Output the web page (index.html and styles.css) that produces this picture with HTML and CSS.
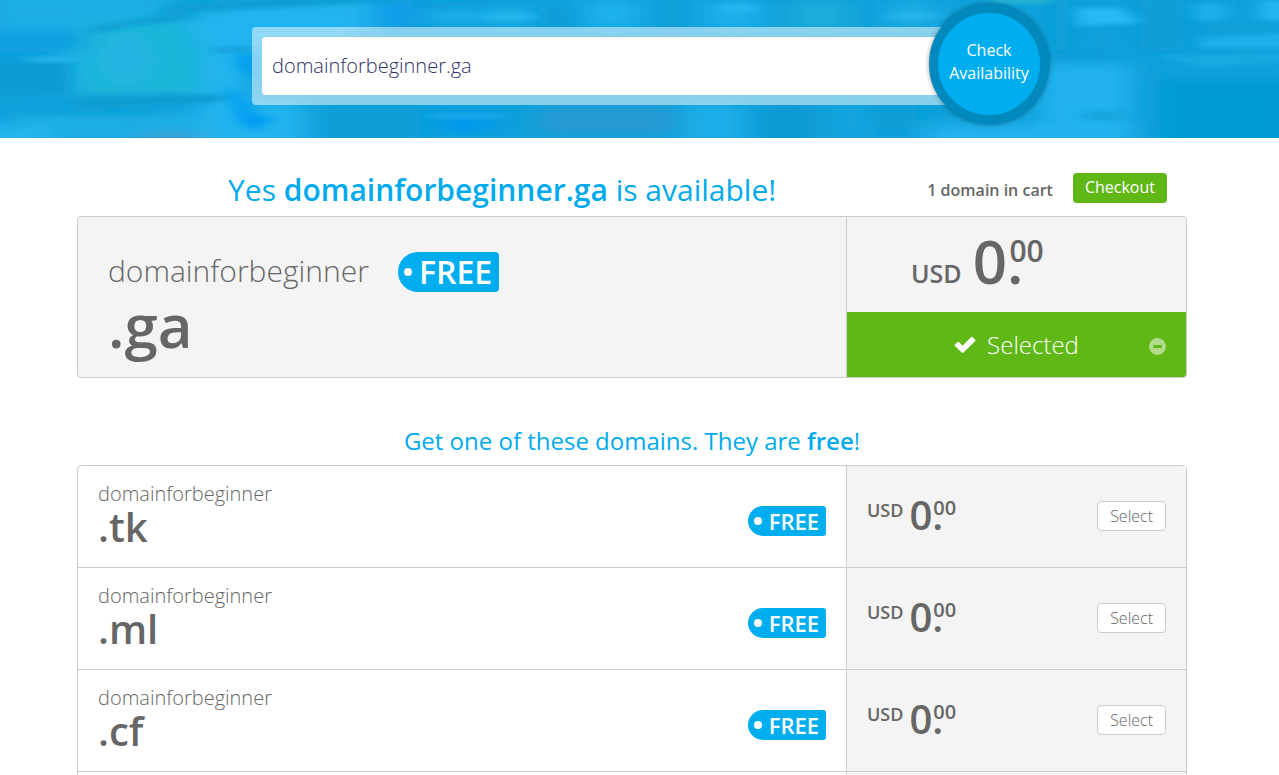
FILE: index.html
```html
<!DOCTYPE html>
<html lang="en">
<head>
    <meta charset="UTF-8">
    <meta name="viewport" content="width=device-width, initial-scale=1.0">
    <title>Check Availability</title>
    <link rel="stylesheet" href="styles.css">
</head>
<body>
    <header class="banner">
        <svg class="banner-bg" viewBox="0 0 1279 138" preserveAspectRatio="none" aria-hidden="true">
            <defs>
                <filter id="soft" x="-5%" y="-20%" width="110%" height="140%"><feGaussianBlur stdDeviation="14 6"/></filter>
                <filter id="streak" x="-5%" y="-20%" width="110%" height="140%"><feGaussianBlur stdDeviation="8 2"/></filter>
            </defs>
            <rect width="1279" height="138" fill="#0fa0da"/>
            <g filter="url(#soft)">
                <rect x="-20" y="-10" width="190" height="40" fill="#1cade6"/>
                <rect x="-20" y="32" width="100" height="20" fill="#0c9fe2"/>
                <rect x="60" y="50" width="160" height="44" fill="#1fb3e2"/>
                <path d="M84 20H190L208 96H82Z" fill="#1eb6d8"/>
                <ellipse cx="126" cy="58" rx="28" ry="28" fill="#22b5e2"/>
                <path d="M180 14L260 0H372V30L330 50H250V100L306 104V150H200V50Z" fill="#22b4ee"/>
                <rect x="20" y="112" width="180" height="40" fill="#1aade6"/>
                <rect x="-20" y="124" width="70" height="30" fill="#22b5ee"/>
                <rect x="139" y="134" width="65" height="12" fill="#3c9fd0"/>
                <rect x="378" y="0" width="36" height="28" fill="#079ceb"/>
                <rect x="433" y="8" width="42" height="16" fill="#1cb0ea"/>
                <rect x="482" y="8" width="56" height="16" fill="#1cb0ea"/>
                <rect x="584" y="0" width="56" height="28" fill="#1fb2ec"/>
                <rect x="310" y="108" width="110" height="40" fill="#0d9dd7"/>
                <rect x="437" y="114" width="58" height="18" fill="#0298ee"/>
                <rect x="540" y="108" width="136" height="26" fill="#2699d2"/>
                <rect x="684" y="104" width="62" height="44" fill="#1aaee8"/>
                <rect x="756" y="104" width="60" height="44" fill="#089ad4"/>
                <rect x="836" y="104" width="30" height="44" fill="#14a6e0"/>
                <rect x="872" y="100" width="44" height="30" fill="#0b9dd6"/>
                <rect x="704" y="2" width="58" height="26" fill="#1db0eb"/>
                <rect x="790" y="2" width="58" height="26" fill="#1baed9"/>
                <rect x="889" y="2" width="48" height="26" fill="#1baee7"/>
                <rect x="1040" y="64" width="90" height="90" fill="#21b3ee"/>
                <rect x="924" y="124" width="210" height="30" fill="#20b2ed"/>
                <rect x="1134" y="70" width="24" height="80" fill="#0b9fd9"/>
                <rect x="1160" y="80" width="140" height="70" fill="#069ad4"/>
                <rect x="1052" y="0" width="20" height="50" fill="#0c9dd6"/>
                <rect x="1140" y="0" width="44" height="50" fill="#0a9cd6"/>
            </g>
            <g filter="url(#streak)">
                <path d="M160 13L290 7L400 0V-4H300L170 6Z" fill="#0a9dd4"/>
                <path d="M90 27L180 12L200 18L130 26L96 34Z" fill="#0b9fd4"/>
                <path d="M73 98L228 94L220 102L73 108Z" fill="#0b9dd2"/>
                <path d="M210 48H256V52H214Z" fill="#0c9dd8"/>
                <path d="M236 56L258 54V84L240 68Z" fill="#049ef0"/>
                <path d="M228 84L244 98L256 114L274 118L254 132L240 124L232 104Z" fill="#009df2"/>
                <rect x="28" y="57" width="44" height="5" fill="#27b8ef"/>
                <rect x="-10" y="62" width="80" height="32" fill="#0b9bd4"/>
                <rect x="30" y="110" width="130" height="3" fill="#0b9cd6"/>
                <rect x="433" y="114" width="66" height="4" fill="#22b0ee"/>
                <rect x="420" y="3" width="70" height="4" fill="#0a9bd7"/>
                <rect x="540" y="8" width="30" height="18" fill="#0b9dd8"/>
                <rect x="486" y="14" width="46" height="6" fill="#27b8f0"/>
                <rect x="722" y="4" width="34" height="8" fill="#27b7f0"/>
                <rect x="890" y="14" width="46" height="5" fill="#29b8ef"/>
                <rect x="994" y="-3" width="56" height="6" fill="#2cb6cc"/>
                <path d="M1076 8H1122L1140 23L1078 26Z" fill="#26b9f5"/>
                <rect x="1194" y="4" width="34" height="16" fill="#1bafe9"/>
                <path d="M1262 0H1290V22L1256 18Z" fill="#22b6f2"/>
                <path d="M1203 38L1290 33V48H1200Z" fill="#1fb1eb"/>
                <path d="M1155 56L1290 52V62L1200 68Z" fill="#16a9e2"/>
                <rect x="1050" y="54" width="60" height="4" fill="#089ad4"/>
                <rect x="1080" y="111" width="44" height="9" fill="#12a5df"/>
            </g>
        </svg>
        <form class="search">
            <input class="search-input" type="text" aria-label="Domain name" value="domainforbeginner.ga">
            <button class="search-btn" type="button">Check<br>Availability</button>
        </form>
    </header>

    <main class="main">
        <div class="top">
            <h1 class="title">Yes <strong>domainforbeginner.ga</strong> is available!</h1>
            <div class="cart">
                <span class="cart-count">1 domain in cart</span>
                <a class="checkout" href="#">Checkout</a>
            </div>
        </div>

        <section class="result">
            <div class="result-name">
                <div class="result-line">
                    <span class="result-domain">domainforbeginner</span>
                    <span class="tag tag-big">FREE</span>
                </div>
                <div class="result-tld">.ga</div>
            </div>
            <div class="result-side">
                <div class="price price-big">
                    <span class="currency">USD</span>
                    <span class="amount">0.</span>
                    <span class="cents">00</span>
                </div>
                <button class="selected" type="button">
                    <span class="selected-label">
                        <svg class="check" viewBox="0 0 22 17" aria-hidden="true"><path d="M1 8.500L3.300 6.200Q4.200 5.400 5.100 6.200L8.600 9.700L16.900 1.200Q17.800 .4 18.700 1.200L21 3.500Q21.800 4.400 21 5.300L9.500 16.500Q8.600 17.200 7.700 16.500L1 10.100Q.3 9.300 1 8.500Z" fill="#fff"/></svg>
                        Selected
                    </span>
                    <svg class="minus" viewBox="0 0 16 16" aria-hidden="true"><path fill-rule="evenodd" d="M8 0A8 8 0 1 1 8 16A8 8 0 1 1 8 0ZM4.500 6.600Q4 6.600 4 7.100V8.900Q4 9.400 4.500 9.400H11.500Q12 9.400 12 8.900V7.100Q12 6.600 11.500 6.600Z" fill="#fff"/></svg>
                </button>
            </div>
        </section>

        <h2 class="subtitle">Get one of these domains. They are <strong>free</strong>!</h2>

        <ul class="domains">
            <li class="domain">
                <div class="domain-name">
                    <div>
                        <div class="name">domainforbeginner</div>
                        <div class="tld">.tk</div>
                    </div>
                    <span class="tag">FREE</span>
                </div>
                <div class="domain-side">
                    <div class="price">
                        <span class="currency">USD</span>
                        <span class="amount">0.</span>
                        <span class="cents">00</span>
                    </div>
                    <button class="select-btn" type="button">Select</button>
                </div>
            </li>
            <li class="domain">
                <div class="domain-name">
                    <div>
                        <div class="name">domainforbeginner</div>
                        <div class="tld">.ml</div>
                    </div>
                    <span class="tag">FREE</span>
                </div>
                <div class="domain-side">
                    <div class="price">
                        <span class="currency">USD</span>
                        <span class="amount">0.</span>
                        <span class="cents">00</span>
                    </div>
                    <button class="select-btn" type="button">Select</button>
                </div>
            </li>
            <li class="domain">
                <div class="domain-name">
                    <div>
                        <div class="name">domainforbeginner</div>
                        <div class="tld">.cf</div>
                    </div>
                    <span class="tag">FREE</span>
                </div>
                <div class="domain-side">
                    <div class="price">
                        <span class="currency">USD</span>
                        <span class="amount">0.</span>
                        <span class="cents">00</span>
                    </div>
                    <button class="select-btn" type="button">Select</button>
                </div>
            </li>
            <li class="domain">
                <div class="domain-name"></div>
                <div class="domain-side"></div>
            </li>
        </ul>
    </main>
</body>
</html>
```
FILE: styles.css
```css
* {
    box-sizing: border-box;
}

body {
    margin: 0;
    background: #fff;
    color: #666;
    font-family: "Open Sans", "Noto Sans", sans-serif;
    font-size: 16px;
}

button, input {
    font-family: inherit;
}

strong {
    font-weight: 600;
}

/* Banner with the search box */
.banner {
    position: relative;
    padding: 27px 15px 33px 0;
    background: #0fa0da;
}

.banner-bg {
    position: absolute;
    top: 0;
    left: 0;
    width: 100%;
    height: 100%;
}

.search {
    position: relative;
    max-width: 760px;
    margin: 0 auto;
    padding: 10px;
    border-radius: 4px;
    background: rgba(255, 255, 255, 0.5);
}

.search-input {
    display: block;
    width: 100%;
    height: 58px;
    padding: 0 10px 2px;
    border: 0;
    border-radius: 4px;
    background: #fff;
    color: #336;
    font-size: 20px;
    font-weight: 300;
}

.search-btn {
    position: absolute;
    top: -23px;
    right: -37px;
    width: 120px;
    height: 120px;
    padding: 0 0 4px;
    border: 9px solid #0089bd;
    border-radius: 50%;
    background: #00aeef;
    box-shadow: 0 0 5px rgba(0, 0, 0, 0.4);
    color: #fff;
    font-size: 16px;
    line-height: 23px;
}

/* Content */
.main {
    padding-right: 15px;
}

.top, .result, .domains {
    max-width: 1110px;
    margin: 0 auto;
}

.top {
    display: flex;
    align-items: flex-end;
    padding: 32px 20px 6px 0;
}

.title {
    flex: 1;
    margin: 0;
    color: #00aaec;
    font-size: 30px;
    font-weight: 400;
    line-height: 40px;
    text-align: center;
}

.cart {
    display: flex;
    align-items: center;
    gap: 20px;
    padding-bottom: 7px;
}

.cart-count {
    padding-top: 4px;
    font-weight: 600;
}

.checkout {
    height: 30px;
    padding: 0 12px;
    border-radius: 4px;
    background: #60b816;
    color: #fff;
    line-height: 28px;
    text-decoration: none;
}

.result {
    display: grid;
    grid-template-columns: 1fr 340px;
    border: 1px solid #ccc;
    border-radius: 4px;
    background: #f4f4f4;
}

.result-name {
    padding: 35px 30px 19px;
}

.result-line {
    display: flex;
    gap: 29px;
}

.result-domain {
    font-size: 30px;
    font-weight: 300;
    line-height: 38px;
}

.result-tld {
    font-size: 60px;
    font-weight: 600;
    line-height: 66px;
}

.result-side {
    display: flex;
    flex-direction: column;
    border-left: 1px solid #ccc;
}

.price {
    display: flex;
    padding-bottom: 2px;
    font-weight: 600;
    line-height: 1;
}

.currency {
    margin: 6px 6px 0 0;
    font-size: 18px;
}

.amount {
    font-size: 40px;
}

.cents {
    margin: 3px 0 0 -10px;
    font-size: 20px;
}

.price-big {
    flex: 1;
    padding: 14px 0 0 64px;
}

.price-big .currency {
    margin: 30px 11px 0 0;
    font-size: 25px;
}

.price-big .amount {
    font-size: 60px;
}

.price-big .cents {
    margin: 5px 0 0 -14px;
    font-size: 30px;
}

.selected {
    display: grid;
    grid-template-columns: 1fr auto 1fr;
    align-items: center;
    height: 65px;
    padding: 0 20px;
    border: 0;
    border-radius: 0 0 3px 0;
    background: #60b816;
    color: #fff;
    font-size: 24px;
    font-weight: 300;
}

.selected-label {
    display: flex;
    grid-column: 2;
    align-items: center;
    gap: 11px;
}

.check {
    width: 22px;
    height: 17px;
}

.minus {
    width: 17px;
    height: 17px;
    margin-top: 4px;
    justify-self: end;
    opacity: 0.5;
}

/* Blue price tag label */
.tag {
    display: flex;
    align-items: center;
    gap: 7px;
    height: 30px;
    padding: 0 7px 0 6px;
    border-radius: 15px 3px 3px 15px;
    background: #00aeef;
    color: #fff;
    font-size: 22px;
    font-weight: 600;
}

.tag::before {
    content: "";
    width: 8px;
    height: 8px;
    border-radius: 50%;
    background: #fff;
}

.tag-big {
    height: 40px;
    border-radius: 20px 4px 4px 20px;
    font-size: 32px;
    line-height: 38px;
}

.subtitle {
    margin: 45px 0 7px;
    color: #00aaec;
    font-size: 24px;
    font-weight: 400;
    line-height: 35px;
    text-align: center;
}

/* List of the other domains */
.domains {
    padding: 0;
    border: 1px solid #ccc;
    border-radius: 4px;
    list-style: none;
}

.domain {
    display: grid;
    grid-template-columns: 1fr 340px;
    border-bottom: 1px solid #ccc;
}

.domain-name {
    display: flex;
    justify-content: space-between;
    align-items: center;
    padding: 14px 20px 10px;
}

.name {
    font-size: 20px;
    font-weight: 300;
    line-height: 28px;
}

.tld {
    padding-bottom: 11px;
    font-size: 40px;
    font-weight: 600;
    line-height: 38px;
}

.domain-name .tag {
    margin-top: 4px;
}

.domain-side {
    display: flex;
    justify-content: space-between;
    align-items: center;
    padding: 0 20px 2px;
    border-left: 1px solid #ccc;
    background: #f4f4f4;
}

.select-btn {
    height: 30px;
    padding: 0 12px;
    border: 1px solid #ccc;
    border-radius: 4px;
    background: #fff;
    color: #666;
    font-size: 16px;
    font-weight: 300;
}
```
